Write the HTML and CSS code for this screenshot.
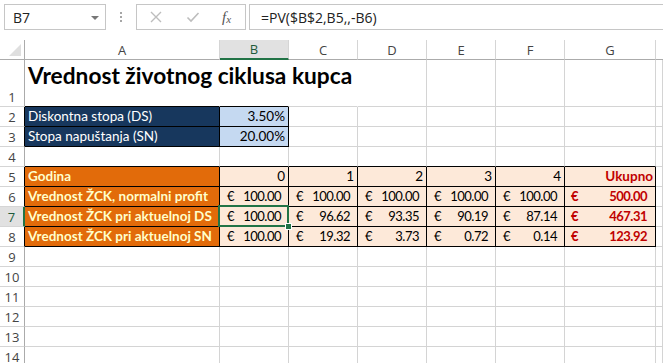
FILE: index.html
```html
<!DOCTYPE html>
<html>
<head>
<meta charset="utf-8">
<link rel="stylesheet" href="styles.css">
</head>
<body>
<div class="app">
  <div class="fbar">
    <div class="namebox"><span class="nb-text">B7</span><span class="caret"></span></div>
    <div class="grip"><i></i><i></i><i></i></div>
    <div class="fbtns">
      <svg class="ico" width="14" height="14" viewBox="0 0 14 14"><path d="M2 2 L12 12 M12 2 L2 12" stroke="#bdbdbd" stroke-width="1.4" fill="none"/></svg>
      <svg class="ico" width="14" height="14" viewBox="0 0 14 14"><path d="M1.5 7.5 L5 11 L12.5 3" stroke="#bdbdbd" stroke-width="1.6" fill="none"/></svg>
      <span class="fx">f<sub>x</sub></span>
    </div>
    <div class="finput">=PV($B$2,B5,,-B6)</div>
  </div>

  <div class="sheet">
    <!-- column headers -->
    <div class="corner"><span class="tri"></span></div>
    <div class="ch">A</div>
    <div class="ch sel">B</div>
    <div class="ch">C</div>
    <div class="ch">D</div>
    <div class="ch">E</div>
    <div class="ch">F</div>
    <div class="ch">G</div>
    <div class="ch last"></div>

    <!-- row 1 -->
    <div class="rh">1</div>
    <div class="c title bb nr">Vrednost životnog ciklusa kupca</div>
    <div class="c bb nr"></div>
    <div class="c nr"></div>
    <div class="c"></div>
    <div class="c"></div>
    <div class="c"></div>
    <div class="c"></div>
    <div class="c"></div>

    <!-- row 2 -->
    <div class="rh bl">2</div>
    <div class="c navy bk">Diskontna stopa (DS)</div>
    <div class="c lblue bk num">3.50%</div>
    <div class="c"></div>
    <div class="c"></div>
    <div class="c"></div>
    <div class="c"></div>
    <div class="c"></div>
    <div class="c"></div>

    <!-- row 3 -->
    <div class="rh bl">3</div>
    <div class="c navy bk">Stopa napuštanja (SN)</div>
    <div class="c lblue bk num">20.00%</div>
    <div class="c"></div>
    <div class="c"></div>
    <div class="c"></div>
    <div class="c"></div>
    <div class="c"></div>
    <div class="c"></div>

    <!-- row 4 -->
    <div class="rh">4</div>
    <div class="c bb"></div>
    <div class="c bb"></div>
    <div class="c bb"></div>
    <div class="c bb"></div>
    <div class="c bb"></div>
    <div class="c bb"></div>
    <div class="c bb"></div>
    <div class="c"></div>

    <!-- row 5 -->
    <div class="rh bl">5</div>
    <div class="c orange bk">Godina</div>
    <div class="c peach bk num">0</div>
    <div class="c peach bk num">1</div>
    <div class="c peach bk num">2</div>
    <div class="c peach bk num">3</div>
    <div class="c peach bk num">4</div>
    <div class="c peach bk num red tot">Ukupno</div>
    <div class="c"></div>

    <!-- row 6 -->
    <div class="rh bl">6</div>
    <div class="c orange bk">Vrednost ŽCK, normalni profit</div>
    <div class="c peach bk acc"><span>€</span><span>100.00</span></div>
    <div class="c peach bk acc"><span>€</span><span>100.00</span></div>
    <div class="c peach bk acc"><span>€</span><span>100.00</span></div>
    <div class="c peach bk acc"><span>€</span><span>100.00</span></div>
    <div class="c peach bk acc"><span>€</span><span>100.00</span></div>
    <div class="c peach bk acc red tot"><span>€</span><span>500.00</span></div>
    <div class="c"></div>

    <!-- row 7 -->
    <div class="rh rsel">7</div>
    <div class="c orange bk">Vrednost ŽCK pri aktuelnoj DS</div>
    <div class="c peach bk acc active"><span>€</span><span>100.00</span><div class="selbox"></div><div class="handle"></div></div>
    <div class="c peach bk acc"><span>€</span><span>96.62</span></div>
    <div class="c peach bk acc"><span>€</span><span>93.35</span></div>
    <div class="c peach bk acc"><span>€</span><span>90.19</span></div>
    <div class="c peach bk acc"><span>€</span><span>87.14</span></div>
    <div class="c peach bk acc red tot"><span>€</span><span>467.31</span></div>
    <div class="c"></div>

    <!-- row 8 -->
    <div class="rh bl">8</div>
    <div class="c orange bk">Vrednost ŽCK pri aktuelnoj SN</div>
    <div class="c peach bk acc"><span>€</span><span>100.00</span></div>
    <div class="c peach bk acc"><span>€</span><span>19.32</span></div>
    <div class="c peach bk acc"><span>€</span><span>3.73</span></div>
    <div class="c peach bk acc"><span>€</span><span>0.72</span></div>
    <div class="c peach bk acc"><span>€</span><span>0.14</span></div>
    <div class="c peach bk acc red tot"><span>€</span><span>123.92</span></div>
    <div class="c"></div>

    <!-- rows 9-14 -->
    <div class="rh">9</div><div class="c"></div><div class="c"></div><div class="c"></div><div class="c"></div><div class="c"></div><div class="c"></div><div class="c"></div><div class="c"></div>
    <div class="rh">10</div><div class="c"></div><div class="c"></div><div class="c"></div><div class="c"></div><div class="c"></div><div class="c"></div><div class="c"></div><div class="c"></div>
    <div class="rh">11</div><div class="c"></div><div class="c"></div><div class="c"></div><div class="c"></div><div class="c"></div><div class="c"></div><div class="c"></div><div class="c"></div>
    <div class="rh">12</div><div class="c"></div><div class="c"></div><div class="c"></div><div class="c"></div><div class="c"></div><div class="c"></div><div class="c"></div><div class="c"></div>
    <div class="rh">13</div><div class="c"></div><div class="c"></div><div class="c"></div><div class="c"></div><div class="c"></div><div class="c"></div><div class="c"></div><div class="c"></div>
    <div class="rh">14</div><div class="c"></div><div class="c"></div><div class="c"></div><div class="c"></div><div class="c"></div><div class="c"></div><div class="c"></div><div class="c"></div>
  </div>
</div>
</body>
</html>
```

FILE: styles.css
```css
* { box-sizing: border-box; }
html, body { margin: 0; padding: 0; background: #fff; overflow: hidden; }
body { width: 663px; height: 363px; }

.app { width: 663px; height: 363px; overflow: hidden; }

/* formula bar */
.fbar {
  height: 40px;
  display: flex;
  align-items: flex-start;
  padding-top: 4px;
  padding-left: 4px;
  font-family: "Open Sans", "Noto Sans", sans-serif;
}
.namebox {
  width: 102px;
  height: 26px;
  border: 1px solid #c6c6c6;
  display: flex;
  align-items: center;
  justify-content: space-between;
  padding: 0 6px 0 8px;
  font-size: 14px;
  color: #222;
}
.caret {
  width: 0; height: 0;
  border-left: 4px solid transparent;
  border-right: 4px solid transparent;
  border-top: 4px solid #777;
  margin-top: 1px;
}
.grip {
  width: 30px;
  height: 26px;
  display: flex;
  flex-direction: column;
  align-items: center;
  justify-content: center;
  gap: 2px;
}
.grip i { display: block; width: 2px; height: 2px; background: #a6a6a6; }
.fbtns {
  width: 110px;
  height: 26px;
  border: 1px solid #c6c6c6;
  display: flex;
  align-items: center;
  padding-left: 12px;
  gap: 23px;
}
.fx {
  font-family: "Liberation Serif", serif;
  font-style: italic;
  font-size: 15px;
  color: #555;
  margin-left: -1px;
}
.fx sub { font-size: 11px; vertical-align: -1px; }
.finput {
  flex: 1;
  margin-left: 3px;
  height: 26px;
  border: 1px solid #c6c6c6;
  border-right: none;
  display: flex;
  align-items: center;
  padding-left: 11px;
  font-size: 14px;
  color: #222;
}

/* sheet grid */
.sheet {
  display: grid;
  grid-template-columns: 25px 195px 69px 69px 69px 69px 69px 91px 1fr;
  grid-template-rows: 20px 47px repeat(13, 20px);
  font-family: Lato, "Open Sans", sans-serif;
  font-size: 13.5px;
}
.corner {
  border-right: 1px solid #ababab;
  border-bottom: 1px solid #ababab;
  position: relative;
}
.tri {
  position: absolute;
  right: 3px; bottom: 3px;
  width: 0; height: 0;
  border-left: 12px solid transparent;
  border-bottom: 12px solid #dfdfdf;
}
.ch {
  border-right: 1px solid #d5d5d5;
  border-bottom: 1px solid #ababab;
  display: flex;
  align-items: center;
  justify-content: center;
  font-family: "Open Sans", "Noto Sans", sans-serif;
  font-size: 13px;
  color: #444;
}
.ch.last { border-right: none; }
.ch.sel {
  background: #e1e1e1;
  border-bottom: 2px solid #217346;
  color: #1e5b3a;
}
.rh {
  grid-column: 1;
  border-right: 1px solid #ababab;
  border-bottom: 1px solid #d5d5d5;
  display: flex;
  align-items: flex-end;
  justify-content: center;
  font-family: "Open Sans", "Noto Sans", sans-serif;
  font-size: 13px;
  line-height: 18px;
  color: #444;
}
.rh.bl { border-right-color: #000; }
.rh.rsel {
  background: #e1e1e1;
  border-right: 2px solid #217346;
  color: #1e5b3a;
}

.c {
  border-right: 1px solid #d4d4d4;
  border-bottom: 1px solid #d4d4d4;
  display: flex;
  align-items: flex-end;
  padding: 0 3px 1px 3px;
  line-height: 18px;
  white-space: nowrap;
  color: #000;
}
.c.bb { border-bottom-color: #000; }
.c.nr { border-right-color: transparent; }
.c.bk { border-right-color: #000; border-bottom-color: #000; }

.title {
  align-items: flex-start;
  overflow: visible;
  position: relative;
  z-index: 1;
  padding-top: 1px;
  font-size: 22.7px;
  font-weight: 700;
  line-height: 30px;
}

.navy { background: #17375d; color: #fff; }
.lblue { background: #c5d9f1; }
.orange { background: #e26b0a; color: #ffffcc; font-weight: 700; }
.peach { background: #fde9d9; }
.num { justify-content: flex-end; }
.acc {
  justify-content: space-between;
  padding-left: 7px;
  padding-right: 7px;
  font-size: 13px;
}
.acc span + span { letter-spacing: -0.5px; }
.red { color: #c00000; }
.tot { font-weight: 700; }
.num.tot { padding-right: 2px; }
.acc.tot { padding-left: 6px; padding-right: 8px; }

.active { position: relative; }
.selbox {
  position: absolute;
  left: -2px; top: -2px; right: -1px; bottom: -1px;
  border: 2px solid #217346;
  pointer-events: none;
}
.handle {
  position: absolute;
  left: 66px; top: 17px;
  width: 5px; height: 5px;
  background: #217346;
  box-shadow: 0 0 0 1px #fff;
}
```
